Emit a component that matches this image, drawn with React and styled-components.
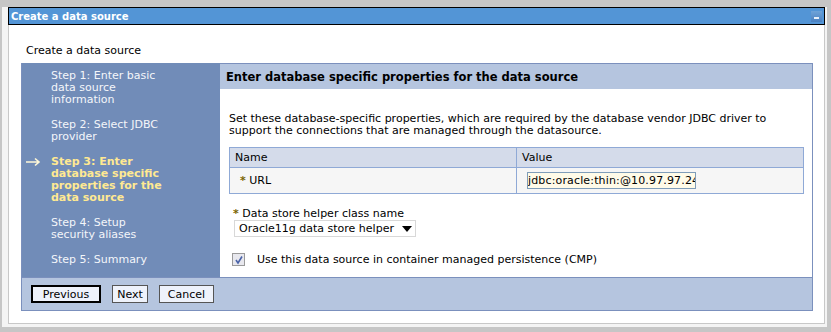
import React from "react";
import styled, { createGlobalStyle } from "styled-components";

const GlobalStyle = createGlobalStyle`
  body {
    margin: 0;
    background: #c6c6c6;
    font-family: "DejaVu Sans", Verdana, sans-serif;
    font-size: 11px;
    color: #000;
  }
`;

const steps = [
  { label: "Step 1: Enter basic data source information" },
  { label: "Step 2: Select JDBC provider" },
  { label: "Step 3: Enter database specific properties for the data source", active: true },
  { label: "Step 4: Setup security aliases" },
  { label: "Step 5: Summary" },
];

const buttons = [
  { label: "Previous", width: 70, primary: true },
  { label: "Next", width: 36 },
  { label: "Cancel", width: 55 },
];

export default function App() {
  return (
    <>
      <GlobalStyle />
      <Page>
        <Frame>
          <TitleBar>
            <span>Create a data source</span>
            <MinButton />
          </TitleBar>
          <Panel>
            <PageTitle>Create a data source</PageTitle>
            <Wizard>
              <StepList>
                {steps.map((s) => (
                  <Step key={s.label} $active={s.active}>
                    {s.active && (
                      <Arrow width="16" height="10" viewBox="0 0 16 10">
                        <path d="M1 5 H14 M10 1.5 L14 5 L10 8.5" stroke="#fff8d8" strokeWidth="1.6" fill="none" />
                      </Arrow>
                    )}
                    {s.label}
                  </Step>
                ))}
              </StepList>
              <Content>
                <ContentHeader>Enter database specific properties for the data source</ContentHeader>
                <ContentBody>
                  <Description>
                    Set these database-specific properties, which are required by the database vendor JDBC driver to
                    support the connections that are managed through the datasource.
                  </Description>
                  <PropTable>
                    <thead>
                      <tr>
                        <Th>Name</Th>
                        <Th>Value</Th>
                      </tr>
                    </thead>
                    <tbody>
                      <tr>
                        <Td>
                          <Req>*</Req> URL
                        </Td>
                        <Td>
                          <UrlInput defaultValue="jdbc:oracle:thin:@10.97.97.24:1521:orcl" />
                        </Td>
                      </tr>
                    </tbody>
                  </PropTable>
                  <FieldLabel>
                    <Req>*</Req> Data store helper class name
                  </FieldLabel>
                  <SelectBox>
                    <span>Oracle11g data store helper</span>
                    <Caret />
                  </SelectBox>
                  <CheckRow>
                    <CheckBox>
                      <svg width="10" height="10" viewBox="0 0 10 10">
                        <path d="M2 5 L4 8 L8 1.5" stroke="#4a63a8" strokeWidth="1.6" fill="none" />
                      </svg>
                    </CheckBox>
                    Use this data source in container managed persistence (CMP)
                  </CheckRow>
                </ContentBody>
              </Content>
              <Footer>
                {buttons.map((b) => (
                  <Button key={b.label} $primary={b.primary} $w={b.width}>
                    {b.label}
                  </Button>
                ))}
              </Footer>
            </Wizard>
          </Panel>
        </Frame>
      </Page>
    </>
  );
}

const Page = styled.div`
  padding: 7px 0 0 2px;
  height: 332px;
  box-sizing: border-box;
`;

const Frame = styled.div`
  width: 825px;
  height: 320px;
  background: #f4f4f4;
  box-sizing: border-box;
  padding: 0 2px 3px 6px;
  display: flex;
  flex-direction: column;
`;

const TitleBar = styled.div`
  height: 18px;
  flex: none;
  box-sizing: border-box;
  border: 1px solid #000;
  background: #5395d6;
  color: #fff;
  font-weight: bold;
  font-size: 10px;
  display: flex;
  align-items: center;
  justify-content: space-between;
  padding: 0 2px;
`;

const MinButton = styled.div`
  width: 11px;
  height: 11px;
  background: linear-gradient(#6fa3d8, #4a80c0);
  position: relative;
  &::after {
    content: "";
    position: absolute;
    left: 3px;
    right: 3px;
    top: 6px;
    height: 2px;
    background: #e8f0fa;
  }
`;

const Panel = styled.div`
  flex: 1;
  background: #fff;
  border: 1px solid #c8c8c8;
  border-top: none;
  padding: 19px 0 0 12px;
`;

const PageTitle = styled.div`
  padding-left: 5px;
  height: 19px;
  line-height: 13px;
`;

const Wizard = styled.div`
  width: 791px;
  height: 248px;
  display: grid;
  grid-template-columns: 198px 593px;
  grid-template-rows: 214px 34px;
  border-left: 1px solid #7b90bd;
  box-sizing: border-box;
`;

const StepList = styled.div`
  background: #718cb8;
  padding: 7px 0 0 29px;
  display: flex;
  flex-direction: column;
  gap: 13px;
`;

const Step = styled.div`
  position: relative;
  width: 122px;
  line-height: 12px;
  color: ${(p) => (p.$active ? "#ffe992" : "#f4f6fa")};
  font-weight: ${(p) => (p.$active ? "bold" : "normal")};
`;

const Arrow = styled.svg`
  position: absolute;
  left: -26px;
  top: 1px;
`;

const Content = styled.div`
  border-right: 1px solid #7b90bd;
  border-top: 1px solid #7b90bd;
  display: flex;
  flex-direction: column;
  min-width: 0;
`;

const ContentHeader = styled.div`
  height: 25px;
  flex: none;
  background: #b5c5df;
  font-weight: bold;
  font-size: 11.5px;
  display: flex;
  align-items: center;
  padding-left: 6px;
`;

const ContentBody = styled.div`
  padding: 24px 10px 0 9px;
`;

const Description = styled.div`
  line-height: 12px;
  width: 570px;
`;

const PropTable = styled.table`
  margin-top: 10px;
  width: 575px;
  border-collapse: collapse;
  border: 1px solid #8fa9d6;
`;

const Th = styled.th`
  background: #d4dbea;
  text-align: left;
  font-weight: normal;
  height: 19px;
  padding: 0 5px;
  border: 1px solid #8fa9d6;
  &:first-child {
    width: 276px;
  }
`;

const Td = styled.td`
  background: #f6f6f6;
  height: 25px;
  padding: 0 10px;
  border: 1px solid #8fa9d6;
`;

const Req = styled.span`
  color: #7a6400;
  font-weight: bold;
`;

const UrlInput = styled.input`
  width: 169px;
  height: 17px;
  box-sizing: border-box;
  border: 1px solid #7f9db9;
  background: #fffbe8;
  font-family: "DejaVu Sans", Verdana, sans-serif;
  font-size: 11px;
  letter-spacing: 0.15px;
  padding: 0;
  outline: none;
`;

const FieldLabel = styled.div`
  margin-top: 13px;
  padding-left: 4px;
  line-height: 13px;
`;

const SelectBox = styled.div`
  margin-left: 5px;
  width: 182px;
  height: 17px;
  box-sizing: border-box;
  border: 1px solid #d8d8d8;
  display: flex;
  align-items: center;
  justify-content: space-between;
  padding: 0 3px 0 4px;
`;

const Caret = styled.span`
  width: 0;
  height: 0;
  border-left: 5px solid transparent;
  border-right: 5px solid transparent;
  border-top: 6px solid #000;
`;

const CheckRow = styled.div`
  margin-top: 16px;
  padding-left: 3px;
  display: flex;
  align-items: center;
  gap: 12px;
`;

const CheckBox = styled.span`
  width: 11px;
  height: 11px;
  border: 1px solid #9a9a9a;
  background: #e8e8ee;
  display: flex;
  align-items: center;
  justify-content: center;
`;

const Footer = styled.div`
  grid-column: 1 / span 2;
  height: 34px;
  box-sizing: border-box;
  background: #b5c5df;
  border-top: 1px solid #7b90bd;
  border-bottom: 1px solid #7b90bd;
  border-right: 1px solid #7b90bd;
  display: flex;
  align-items: center;
  gap: 11px;
  padding-left: 9px;
`;

const Button = styled.button`
  width: ${(p) => p.$w}px;
  height: 18px;
  box-sizing: border-box;
  background: #eef2fb;
  border: ${(p) => (p.$primary ? "2px solid #000" : "1px solid #555")};
  font-family: "DejaVu Sans", Verdana, sans-serif;
  font-size: 11px;
  padding: 0;
  color: #000;
  border-radius: 0;
`;
